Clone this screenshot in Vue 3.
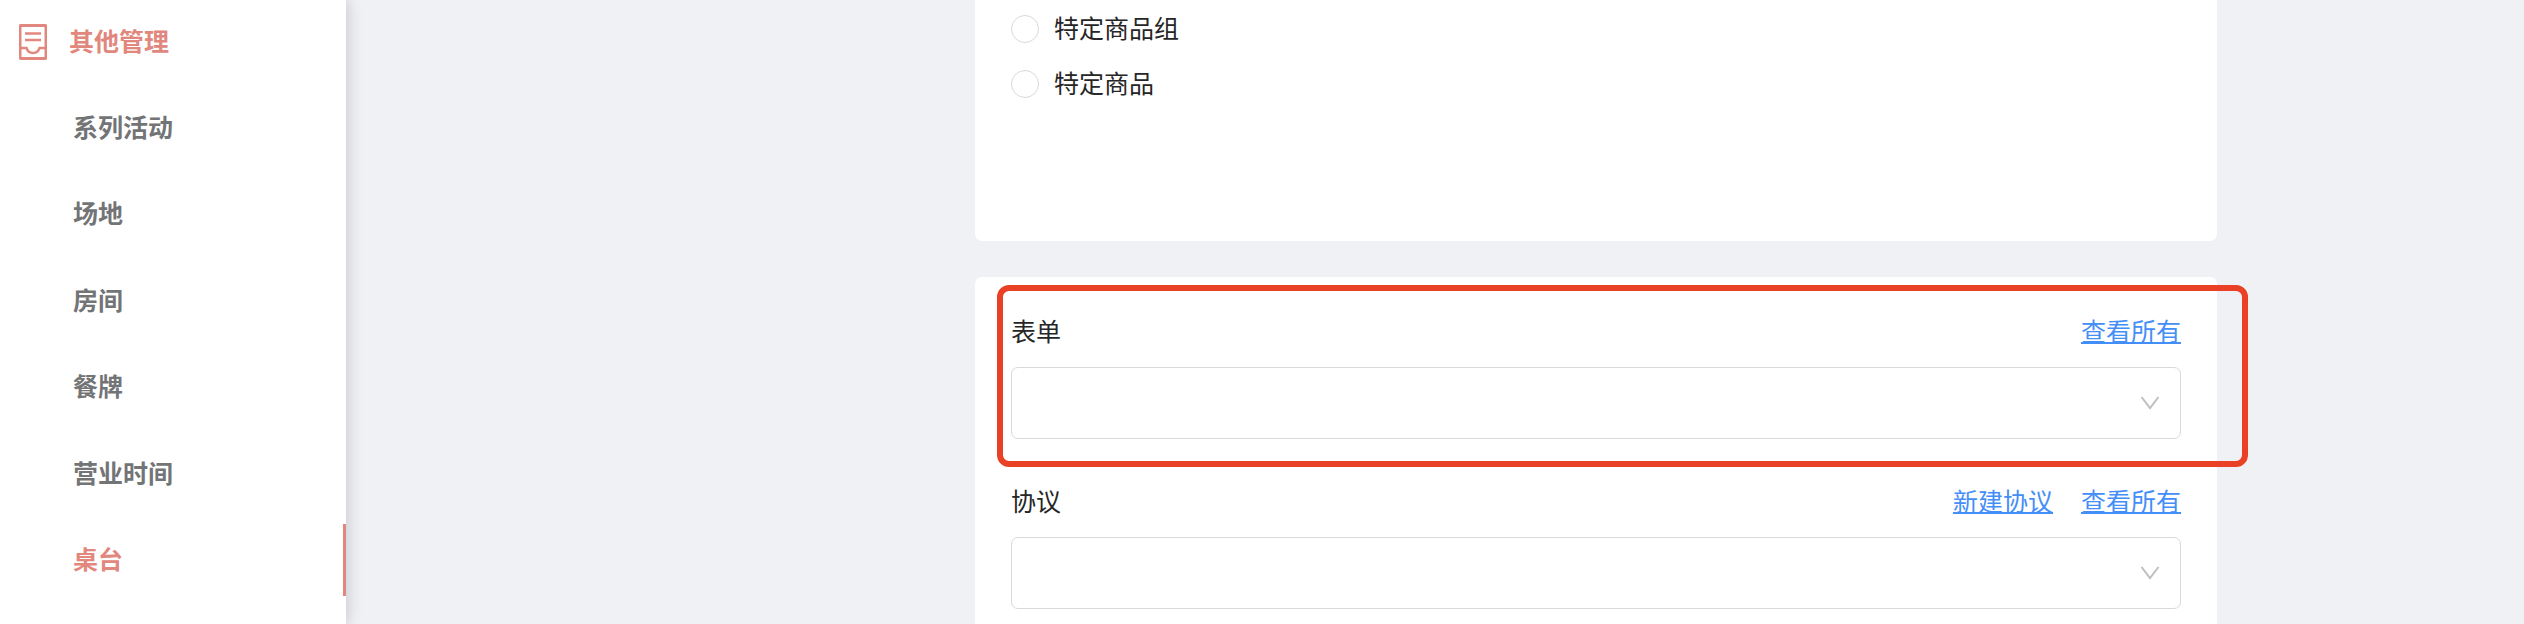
<template>
  <div class="layout">
    <!-- side menu -->
    <aside class="sidebar">
      <div class="menu-title">
        <svg class="menu-icon" viewBox="0 0 28 36" fill="none" stroke="currentColor" aria-hidden="true">
          <rect x="1" y="1.5" width="26" height="33" rx="1" stroke-width="3" />
          <path d="M6 9.5h16M6 16h16" stroke-width="2.6" />
          <path d="M1 24h6.5C8.5 27.4 10.8 29 14 29s5.5-1.6 6.5-5H27" stroke-width="2.6" />
        </svg>
        <span>其他管理</span>
      </div>
      <nav>
        <ul class="menu">
          <li v-for="item in menu" :key="item.id">
            <a href="#" :class="{ 'active': item.id === activeId }" @click.prevent="activeId = item.id">{{ item.name }}</a>
          </li>
        </ul>
      </nav>
    </aside>

    <main class="content">
      <section class="card range">
        <label v-for="option in ranges" :key="option.value" class="radio">
          <input type="radio" name="range" :value="option.value" v-model="range">
          <span>{{ option.label }}</span>
        </label>
      </section>

      <section class="card">
        <div v-for="field in fields" :key="field.id" class="field" :class="{ 'marked': field.marked }">
          <div class="field-head">
            <label :for="field.id">{{ field.label }}</label>
            <div class="links">
              <a v-for="link in field.links" :key="link" href="#" @click.prevent>{{ link }}</a>
            </div>
          </div>
          <div class="select-box">
            <select :id="field.id" v-model="field.value">
              <option value=""></option>
            </select>
            <svg class="arrow" viewBox="0 0 20 14" fill="none" stroke="currentColor" stroke-width="2" aria-hidden="true">
              <path d="M1.5 1L10 12L18.5 1" />
            </svg>
          </div>
        </div>
      </section>
    </main>
  </div>
</template>

<script setup>
import { ref } from 'vue';

const activeId = ref(6);
const menu = ref([
  {id:1, name:"系列活动"},
  {id:2, name:"场地"},
  {id:3, name:"房间"},
  {id:4, name:"餐牌"},
  {id:5, name:"营业时间"},
  {id:6, name:"桌台"}
]);

const range = ref("");
const ranges = ref([
  {value:"group", label:"特定商品组"},
  {value:"product", label:"特定商品"}
]);

const fields = ref([
  {id:"form", label:"表单", value:"", links:["查看所有"], marked:true},
  {id:"agreement", label:"协议", value:"", links:["新建协议", "查看所有"], marked:false}
]);
</script>

<style>
body {
  margin: 0;
  background: #f0f1f5;
}
</style>

<style scoped>
.layout {
  display: flex;
  height: 100vh;
  overflow: hidden;
  font-family: "Noto Sans CJK SC", sans-serif;
  font-size: 25px;
  line-height: 34px;
  color: #262626;
  background: #f0f1f5;
}

/* side menu */
.sidebar {
  flex: none;
  width: 346px;
  box-sizing: border-box;
  padding-top: 6px;
  background: #fff;
  box-shadow: 2px 0 14px rgba(0, 0, 0, 0.16);
  font-weight: bold;
}
.menu-title {
  display: flex;
  align-items: center;
  gap: 22px;
  height: 72px;
  padding-left: 19px;
  color: #e1877d;
}
.menu-title span {
  padding-bottom: 4px;
}
.menu-icon {
  width: 28px;
  height: 36px;
}
.menu {
  display: flex;
  flex-direction: column;
  justify-content: space-between;
  height: 504px;
  margin: 14px 0 0;
  padding: 0;
  list-style: none;
}
.menu a {
  display: block;
  padding: 17px 0 21px 73px;
  border-right: 3px solid transparent;
  color: #737476;
  text-decoration: none;
}
.menu a.active {
  color: #e1877d;
  border-right-color: #e1877d;
}

/* content */
.content {
  flex: 1;
  min-width: 0;
  display: flex;
  flex-direction: column;
  gap: 36px;
  padding: 0 307px 0 629px;
}
.card {
  flex: none;
  display: flex;
  flex-direction: column;
  gap: 44px;
  padding: 36px;
  border-radius: 7px;
  background: #fff;
}
.range {
  gap: 0;
  padding-top: 1px;
  padding-bottom: 130px;
  border-radius: 0 0 7px 7px;
}
.radio {
  display: flex;
  align-items: center;
  gap: 15px;
  height: 55px;
}
.radio span {
  padding-bottom: 4px;
}
.radio input {
  appearance: none;
  width: 28px;
  height: 28px;
  box-sizing: border-box;
  margin: 0;
  border: 1px solid #d9d9d9;
  border-radius: 50%;
  background: #fff;
}
.radio input:checked {
  border: 8px solid #448ef7;
}

/* form fields */
.field {
  position: relative;
  display: flex;
  flex-direction: column;
  gap: 20px;
}
.field-head {
  display: flex;
  justify-content: space-between;
}
.links {
  display: flex;
  gap: 28px;
}
.links a {
  color: #448ef7;
  text-decoration-thickness: 2px;
}
.select-box {
  display: grid;
  align-items: center;
}
.select-box select {
  grid-area: 1 / 1;
  appearance: none;
  width: 100%;
  height: 72px;
  padding: 0 60px 0 20px;
  border: 1px solid #d9d9d9;
  border-radius: 7px;
  background: #fff;
  color: inherit;
  font: inherit;
}
.arrow {
  grid-area: 1 / 1;
  justify-self: end;
  width: 20px;
  height: 14px;
  margin-right: 21px;
  color: #bfbfbf;
  pointer-events: none;
}

/* red frame around the marked field */
.marked::after {
  content: "";
  position: absolute;
  top: -28px;
  right: -67px;
  bottom: -28px;
  left: -14px;
  border: 6px solid #ea4025;
  border-radius: 12px;
  pointer-events: none;
}
</style>
